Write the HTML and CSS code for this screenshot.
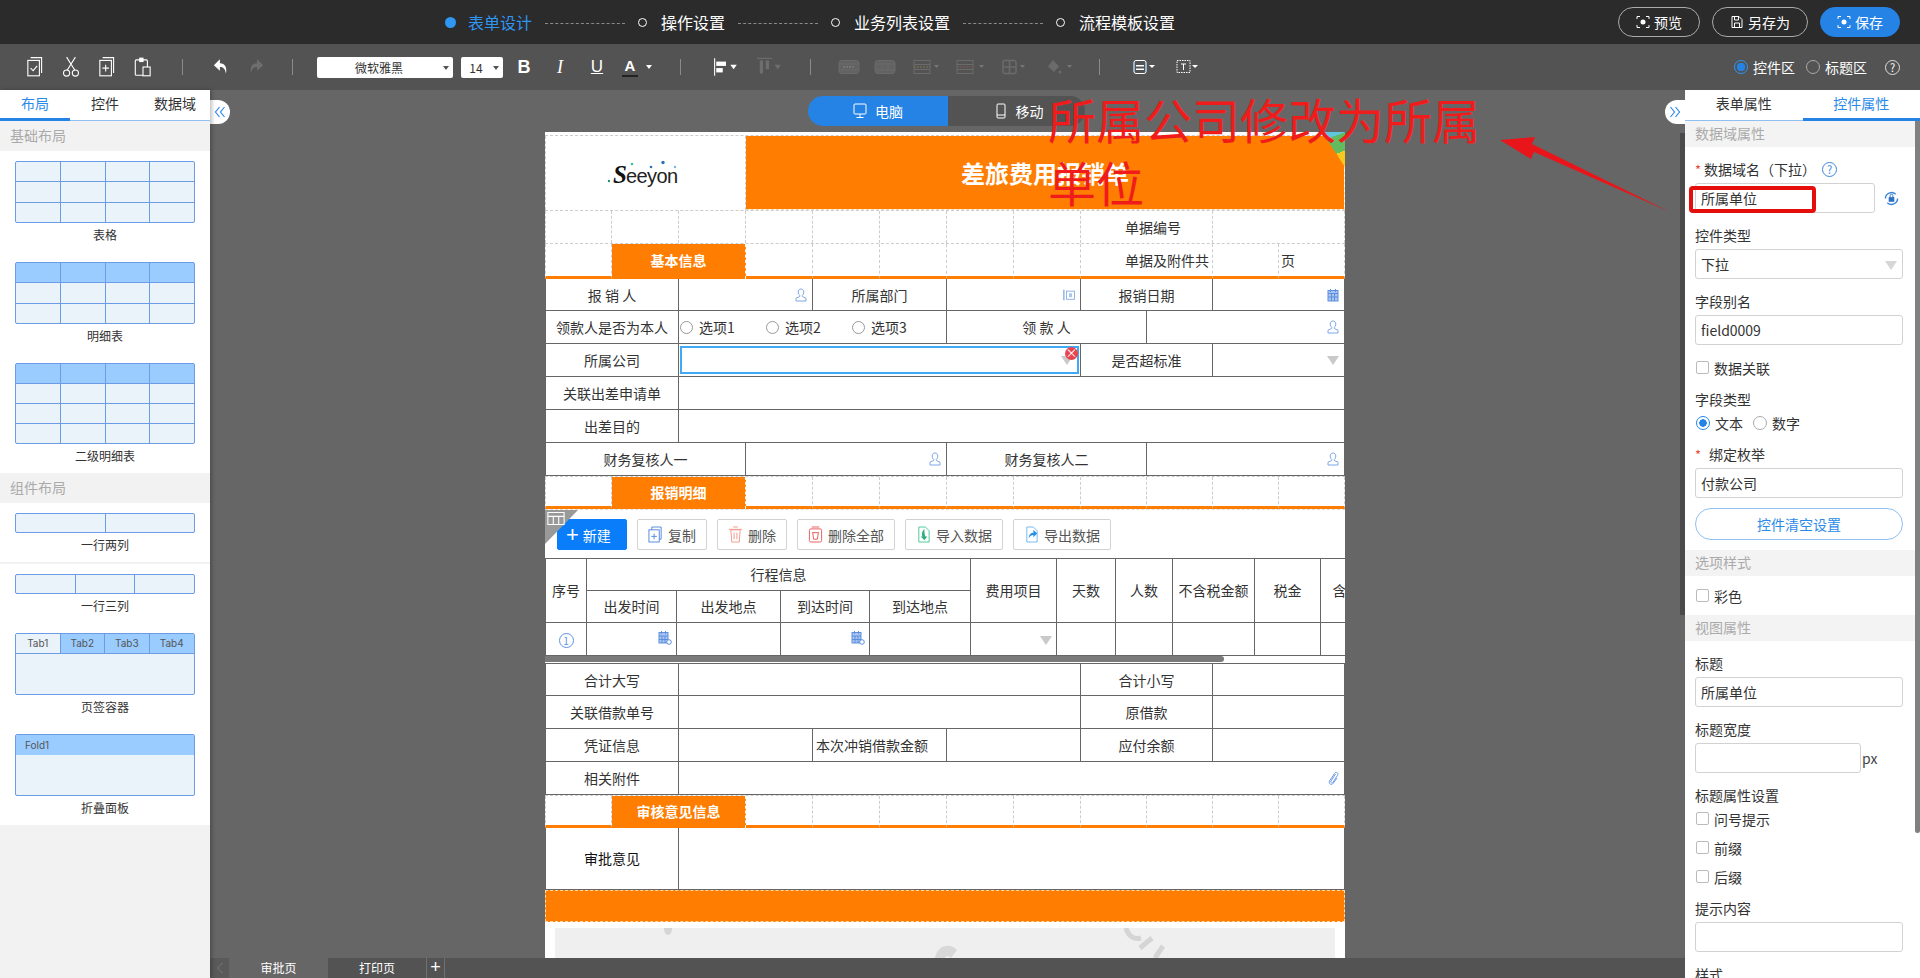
FILE: index.html
```html
<!DOCTYPE html>
<html lang="zh-CN">
<head>
<meta charset="utf-8">
<title>表单设计</title>
<link rel="stylesheet" href="styles.css">
</head>
<body>
<svg class="defs" width="0" height="0" aria-hidden="true">
  <symbol id="i-user" viewBox="0 0 12 14"><path d="M6 1c-1.800 0-2.800 1.300-2.800 3 0 1.500.7 2.700 1.500 3.300v1.200L1 10.200V13h10v-2.800L7.300 8.500V7.300C8.100 6.700 8.800 5.500 8.800 4 8.800 2.300 7.800 1 6 1z" fill="none" stroke="#7fa8e8" stroke-width="1"/></symbol>
  <symbol id="i-date" viewBox="0 0 12 14"><rect x="1" y="2.500" width="10" height="10.500" fill="#a9c6f2" stroke="#5d8fdc"/><path d="M3.500 1v3M8.500 1v3M1 5.500h10M4.500 5.500v7.500M7.500 5.500v7.500M1 9h10" stroke="#5d8fdc" fill="none"/></symbol>
  <symbol id="i-date2" viewBox="0 0 14 15"><rect x="1" y="2.500" width="9" height="10.500" fill="#a9c6f2" stroke="#5d8fdc"/><path d="M3.500 1v3M7.500 1v3M1 6h9M1 9.500h9M4 6v7M7 6v7" stroke="#5d8fdc" fill="none"/><circle cx="11" cy="12" r="2.300" fill="#fff" stroke="#5d8fdc"/></symbol>
  <symbol id="i-dept" viewBox="0 0 14 14"><path d="M1 1v12" stroke="#7fa8e8" stroke-width="1.500"/><rect x="4" y="2.500" width="9.500" height="9.500" fill="none" stroke="#7fa8e8"/><rect x="7" y="5" width="3.500" height="4.500" fill="#a9c6f2"/></symbol>
  <symbol id="i-shot" viewBox="0 0 14 14"><path d="M1 4V1.500h3M10 1.500h3V4M13 10v2.500h-3M4 12.500H1V10" fill="none" stroke="currentColor"/><circle cx="7" cy="7" r="2.500" fill="currentColor"/></symbol>
</svg>

<header class="topbar">
  <nav class="steps">
    <span class="dot on"></span><span class="step on">表单设计</span><span class="dash"></span>
    <span class="dot"></span><span class="step">操作设置</span><span class="dash"></span>
    <span class="dot"></span><span class="step">业务列表设置</span><span class="dash"></span>
    <span class="dot"></span><span class="step">流程模板设置</span>
  </nav>
  <div class="actions">
    <button class="pill"><svg class="pi"><use href="#i-shot"/></svg>预览</button>
    <button class="pill wide"><svg class="pi" viewBox="0 0 14 14"><path d="M2 1.500h7l3 3v8H2z" fill="none" stroke="currentColor"/><path d="M4.500 2v3h4V2M4.500 12V8h5v4" fill="none" stroke="currentColor"/></svg>另存为</button>
    <button class="pill save"><svg class="pi"><use href="#i-shot"/></svg>保存</button>
  </div>
</header>

<div class="toolbar">
  <div class="tools t1">
    <svg class="ti" viewBox="0 0 18 20"><path d="M5 1.500h10v14" fill="none" stroke="#fff"/><rect x="2.500" y="4" width="10.500" height="14" fill="none" stroke="#fff"/><path d="M5 11l2.300 2.300L11 9" fill="none" stroke="#fff"/></svg>
    <svg class="ti" viewBox="0 0 18 20"><path d="M5 1l7.500 12M13 1L5.500 13" stroke="#fff" fill="none"/><circle cx="5" cy="15.500" r="2.800" fill="none" stroke="#fff"/><circle cx="13" cy="15.500" r="2.800" fill="none" stroke="#fff"/></svg>
    <svg class="ti" viewBox="0 0 18 20"><path d="M5 1.500h10v14" fill="none" stroke="#fff"/><rect x="2.500" y="4" width="10.500" height="14" fill="none" stroke="#fff"/><path d="M7.800 8v6M4.800 11h6" stroke="#fff" fill="none"/></svg>
    <svg class="ti" viewBox="0 0 18 20"><rect x="2" y="3.500" width="11" height="14" rx="1" fill="none" stroke="#fff"/><rect x="5.500" y="1.500" width="4" height="4" fill="#fff"/><rect x="9" y="10" width="6.500" height="8" fill="#535353" stroke="#fff"/></svg>
  </div>
  <i class="sep s-a"></i>
  <div class="tools t2">
    <svg class="ti" viewBox="0 0 18 20"><path d="M8 3L2.500 8.500 8 13.500V10c3 0 4.800 1.500 5.500 6 1.200-5.500-.8-9.500-5.500-9.500z" fill="#fff"/></svg>
    <svg class="ti" viewBox="0 0 18 20"><path d="M10 3l5.500 5.500-5.500 5V10c-3 0-4.800 1.500-5.500 6-1.200-5.500.8-9.500 5.500-9.500z" fill="#6e6e6e"/></svg>
  </div>
  <i class="sep s-b"></i>
  <div class="sel font">微软雅黑<span class="car dk"></span></div>
  <div class="sel size">14<span class="car dk"></span></div>
  <span class="fmt b">B</span>
  <span class="fmt i">I</span>
  <span class="fmt u">U</span>
  <span class="fmt a">A</span><span class="car a-car"></span>
  <i class="sep s-c"></i>
  <svg class="ti align" viewBox="0 0 24 20"><path d="M1.500 2v16" stroke="#fff"/><rect x="3" y="5" width="9" height="4" fill="#fff"/><rect x="3" y="11" width="6" height="4" fill="#fff"/><path d="M16 8h6l-3 4z" fill="#fff"/></svg>
  <svg class="ti valign" viewBox="0 0 24 20"><path d="M1 2h14" stroke="#6e6e6e"/><rect x="3.500" y="4" width="3" height="12" fill="#6e6e6e"/><rect x="9" y="4" width="3" height="8" fill="#6e6e6e"/><path d="M17 8h6l-3 4z" fill="#6e6e6e"/></svg>
  <i class="sep s-d"></i>
  <div class="grays">
    <svg class="gi w22" viewBox="0 0 22 20"><rect x="1" y="3.500" width="20" height="13" rx="3" fill="#626262" stroke="#6b6b6b"/><path d="M1 7h20M1 13h20" stroke="#6b6b6b"/><path d="M5 10h12" stroke="#7b8a8a" stroke-dasharray="2 1"/></svg>
    <svg class="gi w22 m14" viewBox="0 0 22 20"><rect x="1" y="3.500" width="20" height="13" rx="3" fill="#626262" stroke="#6b6b6b"/><path d="M1 7h20M1 13h20M8 7v6M14 7v6" stroke="#6b6b6b"/></svg>
    <svg class="gi w28 m16" viewBox="0 0 28 20"><rect x="2" y="3.500" width="16" height="13" fill="none" stroke="#6b6b6b"/><path d="M2 7.500h16M2 12.500h16" stroke="#6b6b6b"/><path d="M2 10h16" stroke="#80785a" stroke-dasharray="2 1"/><path d="M22 8h5l-2.500 3z" fill="#777"/></svg>
    <svg class="gi w30 m15" viewBox="0 0 30 20"><rect x="2" y="3.500" width="16" height="13" fill="none" stroke="#6b6b6b"/><path d="M2 7.500h16M2 12.500h16" stroke="#6b6b6b"/><path d="M2 10h16" stroke="#805a5a" stroke-dasharray="2 1"/><path d="M24 8h5l-2.500 3z" fill="#777"/></svg>
    <svg class="gi w23 m17" viewBox="0 0 23 20"><rect x="1" y="3.500" width="13" height="13" rx="2" fill="none" stroke="#6b6b6b" stroke-width="1.500"/><path d="M1 10h13M7.500 3.500v13" stroke="#6b6b6b" stroke-width="1.500"/><path d="M18 8h5l-2.500 3z" fill="#777"/></svg>
    <svg class="gi w27 m20" viewBox="0 0 27 20"><path d="M8 3l6 6.500-5 5.500-6-5.500z" fill="#6b6b6b"/><circle cx="15" cy="15" r="1.500" fill="#6b6b6b"/><path d="M22 8h5l-2.500 3z" fill="#777"/></svg>
  </div>
  <i class="sep s-e"></i>
  <svg class="ti lay1" viewBox="0 0 22 20"><rect x="1" y="3.500" width="12" height="13" rx="2" fill="none" stroke="#fff"/><path d="M1 5v10M13 5v10" stroke="#8cc0f0"/><path d="M3 8h8v1.500H3zM3 11.500h8V13H3z" fill="#fff"/><path d="M16 8h6l-3 3z" fill="#fff"/></svg>
  <svg class="ti lay2" viewBox="0 0 22 20"><rect x="1" y="3.500" width="13" height="12" fill="none" stroke="#fff" stroke-dasharray="1.500 1"/><path d="M5 7h5M7.500 7v6" stroke="#fff"/><path d="M16 8h6l-3 3z" fill="#fff"/></svg>
  <div class="zones">
    <span class="zr on"></span><span class="zl">控件区</span>
    <span class="zr"></span><span class="zl">标题区</span>
    <span class="zq">?</span>
  </div>
</div>

<div class="main">
  <aside class="left">
    <div class="tabs three"><span class="tab on">布局</span><span class="tab">控件</span><span class="tab">数据域</span></div>
    <div class="gh">基础布局</div>
    <div class="lib">
      <div class="th g4 r3"><i></i><i></i><i></i><i></i><i></i><i></i><i></i><i></i><i></i><i></i><i></i><i></i></div>
      <div class="tl">表格</div>
      <div class="th g4 r3 hd"><i></i><i></i><i></i><i></i><i></i><i></i><i></i><i></i><i></i><i></i><i></i><i></i></div>
      <div class="tl">明细表</div>
      <div class="th g4 r4 hd"><i></i><i></i><i></i><i></i><i></i><i></i><i></i><i></i><i></i><i></i><i></i><i></i><i></i><i></i><i></i><i></i></div>
      <div class="tl">二级明细表</div>
    </div>
    <div class="gh">组件布局</div>
    <div class="lib lib2">
      <div class="th g2c"><i></i><i></i></div>
      <div class="tl short">一行两列</div>
    </div>
    <div class="lib lib3">
      <div class="th g3c"><i></i><i></i><i></i></div>
      <div class="tl">一行三列</div>
      <div class="tabth">
        <div class="tabhead"><span class="on">Tab1</span><span>Tab2</span><span>Tab3</span><span>Tab4</span></div>
      </div>
      <div class="tl">页签容器</div>
      <div class="tabth"><div class="foldhead">Fold1</div></div>
      <div class="tl last">折叠面板</div>
    </div>
  </aside>

  <div class="center">
    <div class="canvas">
      <div class="seg"><span class="seg-a"><svg class="si" viewBox="0 0 14 16"><rect x="1" y="1" width="12" height="10" rx="1" fill="none" stroke="#fff"/><path d="M7 11v3M3.500 14.500h7" stroke="#fff"/></svg>电脑</span><span class="seg-b"><svg class="si" viewBox="0 0 14 16"><rect x="3" y="1" width="8" height="14" rx="1" fill="none" stroke="#fff"/><path d="M3 12h8" stroke="#fff"/></svg>移动</span></div>

      <div class="form">
        <div class="gap"></div>
        <div class="row title-row">
          <div class="logo s3">
            <svg class="logo-svg" viewBox="0 0 76 26"><circle cx="26" cy="4" r="1.300" fill="#3fbf9f"/><circle cx="45" cy="7" r="1.300" fill="#2d6fb8"/><circle cx="57" cy="2.500" r="1.700" fill="#2d6fb8"/><circle cx="69" cy="7" r="1.200" fill="#7fb2e5"/><circle cx="3" cy="21" r="1.200" fill="#2a8f6f"/><text x="7" y="23" class="logo-big">S</text><text x="20" y="23" class="logo-text" textLength="52">eeyon</text></svg>
          </div>
          <div class="s9 title">差旅费用报销单</div>
        </div>
        <div class="row dash-row">
          <i class="dc"></i><i class="dc"></i><i class="dc"></i><i class="dc"></i><i class="dc"></i><i class="dc"></i><i class="dc"></i><i class="dc"></i>
          <div class="dc s2 lab-l">单据编号</div><div class="dc s2"></div>
        </div>
        <div class="row sec sec-tall">
          <i class="dc"></i><div class="sec-t s2">基本信息</div><i class="dc"></i><i class="dc"></i><i class="dc"></i><i class="dc"></i><i class="dc"></i>
          <div class="dc s2 lab-l">单据及附件共</div><i class="dc"></i><div class="dc val-l">页</div>
        </div>
        <div class="row f first"><div class="c s2">报 销 人</div><div class="c s2 ico"><svg class="fi"><use href="#i-user"/></svg></div><div class="c s2">所属部门</div><div class="c s2 ico"><svg class="fi"><use href="#i-dept"/></svg></div><div class="c s2">报销日期</div><div class="c s2 ico"><svg class="fi"><use href="#i-date"/></svg></div></div>
        <div class="row f"><div class="c s2">领款人是否为本人</div><div class="c s4 radios"><label><span class="ro"></span>选项1</label><label><span class="ro"></span>选项2</label><label><span class="ro"></span>选项3</label></div><div class="c s3">领 款 人</div><div class="c s3 ico"><svg class="fi"><use href="#i-user"/></svg></div></div>
        <div class="row f"><div class="c s2">所属公司</div><div class="c s6 selcell"><div class="focus"><span class="tri"></span><span class="x">×</span></div></div><div class="c s2">是否超标准</div><div class="c s2 ico"><span class="tri"></span></div></div>
        <div class="row f"><div class="c s2">关联出差申请单</div><div class="c s10"></div></div>
        <div class="row f"><div class="c s2">出差目的</div><div class="c s10"></div></div>
        <div class="row f"><div class="c s3">财务复核人一</div><div class="c s3 ico"><svg class="fi"><use href="#i-user"/></svg></div><div class="c s3">财务复核人二</div><div class="c s3 ico"><svg class="fi"><use href="#i-user"/></svg></div></div>
        <div class="row sec">
          <i class="dc"></i><div class="sec-t s2">报销明细</div><i class="dc"></i><i class="dc"></i><i class="dc"></i><i class="dc"></i><i class="dc"></i><i class="dc"></i><i class="dc"></i><i class="dc"></i><i class="dc"></i>
        </div>
        <div class="dtools">
          <span class="flag"><svg class="flag-g" viewBox="0 0 16 12"><path d="M.5.500h15v11H.5zM.5 4h15M5.500 4v7.500M10.500 4v7.500" fill="none" stroke="#fff"/></svg></span>
          <button class="db new"><span class="plus">+</span>新建</button>
          <button class="db"><svg class="bi" viewBox="0 0 16 18"><rect x="1" y="4" width="11" height="13" fill="none" stroke="#4f86e0"/><path d="M4 4V1h10v13h-2M6.500 8v6M3.500 11h6" fill="none" stroke="#4f86e0"/></svg>复制</button>
          <button class="db"><svg class="bi" viewBox="0 0 16 18"><path d="M3 4h10l-1 13H4zM1 3.500h14M5.500 1h5M6.500 7v7M9.500 7v7" fill="none" stroke="#f2958a"/></svg>删除</button>
          <button class="db"><svg class="bi" viewBox="0 0 16 18"><rect x="1.500" y="3" width="13" height="14" rx="1.500" fill="none" stroke="#ea5a5a"/><path d="M4 1h8M4.500 7h7M5 7l1 7h4l1-7" fill="none" stroke="#ea5a5a"/></svg>删除全部</button>
          <button class="db"><svg class="bi" viewBox="0 0 16 18"><path d="M3 1h7l4 4v12H3z" fill="none" stroke="#48c79a"/><path d="M9 3c-3 3-3 6-2 8H5l4 4 3-4h-2c-1-2-1-5-1-8z" fill="#2fae7d"/></svg>导入数据</button>
          <button class="db"><svg class="bi" viewBox="0 0 16 18"><path d="M3 1h7l4 4v12H3z" fill="none" stroke="#6fb6f0"/><path d="M5 13c0-4 2-6 5-6V4l4 4-4 4V9.500c-2 0-3.500 1-5 3.500z" fill="#2d8ee8"/></svg>导出数据</button>
        </div>
        <div class="dwrap">
          <table class="dt">
            <colgroup><col class="w1"><col class="w2"><col class="w3"><col class="w4"><col class="w5"><col class="w6"><col class="w7"><col class="w8"><col class="w9"><col class="w10"><col class="w11"></colgroup>
            <tr><th rowspan="2">序号</th><th colspan="4">行程信息</th><th rowspan="2">费用项目</th><th rowspan="2">天数</th><th rowspan="2">人数</th><th rowspan="2">不含税金额</th><th rowspan="2">税金</th><th rowspan="2">含税金额</th></tr>
            <tr><th>出发时间</th><th>出发地点</th><th>到达时间</th><th>到达地点</th></tr>
            <tr class="data"><td class="num"><span class="n1">1</span></td><td class="ic"><svg class="fi2"><use href="#i-date2"/></svg></td><td></td><td class="ic"><svg class="fi2"><use href="#i-date2"/></svg></td><td></td><td class="ic"><span class="tri"></span></td><td></td><td></td><td></td><td></td><td></td></tr>
          </table>
          <div class="hscroll"><span class="hthumb"></span></div>
        </div>
        <div class="row f first2"><div class="c s2">合计大写</div><div class="c s6"></div><div class="c s2">合计小写</div><div class="c s2"></div></div>
        <div class="row f"><div class="c s2">关联借款单号</div><div class="c s6"></div><div class="c s2">原借款</div><div class="c s2"></div></div>
        <div class="row f"><div class="c s2">凭证信息</div><div class="c s2"></div><div class="c s2 start">本次冲销借款金额</div><div class="c s2"></div><div class="c s2">应付余额</div><div class="c s2"></div></div>
        <div class="row f"><div class="c s2">相关附件</div><div class="c s10 ico"><svg class="fi" viewBox="0 0 12 14"><path d="M8.500 3L4 10c-1 1.500 1 2.800 2 1.300l4.500-7C12 2 9 .200 7.500 2.500L2.500 10c-1.500 2.500 2 4.800 3.700 2.300L10 7" fill="none" stroke="#6d9ce6"/></svg></div></div>
        <div class="row sec">
          <i class="dc"></i><div class="sec-t s2">审核意见信息</div><i class="dc"></i><i class="dc"></i><i class="dc"></i><i class="dc"></i><i class="dc"></i><i class="dc"></i><i class="dc"></i><i class="dc"></i><i class="dc"></i>
        </div>
        <div class="row f tall"><div class="c s2 strong">审批意见</div><div class="c s10"></div></div>
        <div class="band"></div>
        <div class="sig"><svg class="wm" viewBox="0 0 780 32"><ellipse cx="113" cy="1" rx="4" ry="6" fill="#d5d5d5"/><path d="M380 30c2-12 14-16 22-8l-6 8c-3-3-6-2-7 2z" fill="#d8d8d8"/><path d="M571 0c2 8 8 12 15 10M585 20l12-10M600 30l8-12" stroke="#d5d5d5" stroke-width="5" fill="none"/></svg></div>
        <span class="corner"></span>
      </div>

      <button class="edge e-l"><svg class="chev" viewBox="0 0 12 12"><path d="M5.500 1L1.500 6l4 5M10.500 1l-4 5 4 5" fill="none" stroke="#2b8ae8" stroke-width="1.200"/></svg></button>
      <button class="edge e-r"><svg class="chev" viewBox="0 0 12 12"><path d="M1.500 1l4 5-4 5M6.500 1l4 5-4 5" fill="none" stroke="#2b8ae8" stroke-width="1.200"/></svg></button>
      <span class="cscroll"></span>
      <div class="note">所属公司修改为所属单位</div>
      <svg class="arrow" viewBox="0 0 180 80"><path d="M174 78L38 18l-3 7L4 6l35-3-3 7z" fill="#e8161a"/></svg>
    </div>
    <div class="pages">
      <span class="pg-back"><svg class="pg-ar" viewBox="0 0 8 12"><path d="M6.500 1L1.500 6l5 5" fill="none" stroke="#7a7a7a"/></svg></span>
      <span class="pg on">审批页</span><span class="pg p2">打印页</span><span class="pg-add">+</span>
    </div>
  </div>

  <aside class="right">
    <div class="tabs two"><span class="tab">表单属性</span><span class="tab on">控件属性</span></div>
    <div class="props">
      <div class="ph">数据域属性</div>
      <div class="pb one">
        <div class="pl first-l"><b class="req">*</b> 数据域名（下拉）<span class="help">?</span></div>
        <div class="in-line"><div class="inp short-in">所属单位</div><svg class="lock" viewBox="0 0 16 16"><path d="M1.500 8a6.500 6.500 0 0 1 11-4.500M14.500 8a6.500 6.500 0 0 1-11 4.500" fill="none" stroke="#3d86dc" stroke-width="1.500"/><rect x="5" y="6.500" width="6" height="5" fill="#2f6fc0"/><path d="M6.500 6.500V5a1.500 1.500 0 0 1 3 0v1.500" fill="none" stroke="#2f6fc0"/></svg><span class="redbox"></span></div>
        <div class="pl">控件类型</div>
        <div class="inp sel-in">下拉<span class="tri pale"></span></div>
        <div class="pl">字段别名</div>
        <div class="inp">field0009</div>
        <label class="chk"><span class="cb"></span>数据关联</label>
        <div class="pl tight">字段类型</div>
        <div class="rad"><span class="rr on"></span>文本<span class="rr"></span>数字</div>
        <div class="pl bind"><b class="req">*</b><span class="ind">绑定枚举</span></div>
        <div class="inp">付款公司</div>
        <button class="clear">控件清空设置</button>
      </div>
      <div class="ph">选项样式</div>
      <div class="pb sm"><label class="chk"><span class="cb"></span>彩色</label></div>
      <div class="ph">视图属性</div>
      <div class="pb view">
        <div class="pl">标题</div>
        <div class="inp">所属单位</div>
        <div class="pl">标题宽度</div>
        <div class="in-line"><div class="inp px-in"></div><span class="px">px</span></div>
        <div class="pl">标题属性设置</div>
        <label class="chk c2 c2f"><span class="cb"></span>问号提示</label>
        <label class="chk c2"><span class="cb"></span>前缀</label>
        <label class="chk c2"><span class="cb"></span>后缀</label>
        <div class="pl hint">提示内容</div>
        <div class="inp"></div>
        <div class="pl">样式</div>
      </div>
      <span class="vscroll"></span>
    </div>
  </aside>
</div>
</body>
</html>
```
FILE: styles.css
```css
* { box-sizing: border-box; }
html, body { margin: 0; height: 100%; overflow: hidden; }
body { font-family: "Noto Sans CJK SC", "Liberation Sans", sans-serif; font-size: 14px; color: #333; background: #666; }
button { font: inherit; }
.defs { position: absolute; }

/* top */
.topbar { height: 44px; background: #2b2b2b; display: flex; align-items: center; color: #fff; padding-left: 445px; padding-right: 20px; justify-content: space-between; }
.steps { display: flex; align-items: center; font-size: 16px; }
.dot { width: 9px; height: 9px; border-radius: 50%; border: 1px solid #fff; margin-right: 14px; }
.dot.on { width: 11px; height: 11px; background: #2f96f3; border: 0; margin-right: 12px; }
.step { white-space: nowrap; }
.step.on { color: #2f96f3; }
.dash { width: 80px; margin: 2px 13px 0; border-top: 1px dashed #8a8a8a; }
.actions { display: flex; gap: 12px; }
.pill { height: 30px; width: 82px; border-radius: 15px; border: 1px solid #aaa; background: transparent; color: #fff; font-size: 14px; display: flex; align-items: center; justify-content: center; gap: 4px; padding: 0; }
.pill.wide { width: 96px; }
.pill.save { width: 80px; background: #2583e6; border-color: #2583e6; }
.pi { width: 14px; height: 14px; }

/* toolbar */
.toolbar { height: 46px; background: #535353; display: flex; align-items: center; padding-left: 25px; color: #fff; }
.tools { display: flex; gap: 16px; }
.ti { width: 20px; height: 22px; flex: none; }
.sep { width: 1px; height: 16px; background: #8a8a8a; flex: none; }
.s-a { margin: 0 0 0 29px; }
.t2 { margin-left: 28px; gap: 15px; }
.s-b { margin-left: 26px; }
.sel { background: #fff; color: #333; height: 21px; border-radius: 2px; font-size: 12px; display: flex; align-items: center; justify-content: center; position: relative; flex: none; }
.font { width: 136px; margin-left: 24px; padding-right: 12px; }
.size { width: 42px; margin-left: 8px; padding-right: 12px; }
.car { width: 0; height: 0; border: 3px solid transparent; border-top: 4px solid #fff; border-bottom: 0; flex: none; }
.car.dk { border-top-color: #555; position: absolute; right: 4px; top: 9px; }
.fmt { font-family: "Liberation Sans", sans-serif; font-size: 18px; width: 16px; text-align: center; flex: none; color: #fff; }
.fmt.b { margin-left: 13px; font-weight: 700; }
.fmt.i { margin-left: 20px; font-style: italic; font-family: "Liberation Serif", serif; }
.fmt.u { margin-left: 21px; text-decoration: underline; font-size: 17px; }
.fmt.a { margin-left: 17px; font-weight: 700; font-size: 15px; border-bottom: 2px solid #222; line-height: 18px; }
.a-car { margin-left: 8px; }
.s-c { margin-left: 28px; }
.align { width: 26px; margin-left: 32px; }
.valign { width: 26px; margin-left: 17px; }
.s-d { margin-left: 28px; }
.grays { display: flex; margin-left: 27px; }
.gi { height: 20px; flex: none; }
.w22 { width: 22px; } .w23 { width: 23px; } .w27 { width: 27px; } .w28 { width: 28px; } .w30 { width: 30px; }
.m14 { margin-left: 14px; } .m15 { margin-left: 15px; } .m16 { margin-left: 16px; } .m17 { margin-left: 17px; } .m20 { margin-left: 20px; }
.s-e { margin-left: 27px; }
.lay1 { width: 22px; margin-left: 33px; }
.lay2 { width: 22px; margin-left: 21px; }
.zones { margin-left: auto; display: flex; align-items: center; padding-right: 20px; font-size: 14px; }
.zr { width: 14px; height: 14px; border-radius: 50%; border: 1px solid #aaa; margin-right: 5px; }
.zr.on { border: 1px solid #2f96f3; background: radial-gradient(circle, #2583e6 0 4px, transparent 4.500px); }
.zl { margin-right: 11px; }
.zq { width: 15px; height: 15px; border: 1px solid #ddd; border-radius: 50%; font-size: 11px; line-height: 13px; text-align: center; margin-left: 7px; }

/* layout */
.main { height: 888px; display: flex; }
.left { width: 210px; background: #f2f2f2; flex: none; position: relative; z-index: 2; box-shadow: 2px 0 4px rgba(0,0,0,.25); }
.right { width: 235px; background: #fff; flex: none; display: flex; flex-direction: column; min-height: 0; position: relative; z-index: 2; }
.center { flex: 1; min-width: 0; display: flex; flex-direction: column; }

.tabs { height: 31px; display: flex; background: #fff; border-bottom: 1px solid #90c0f2; }
.tab { flex: 1; text-align: center; line-height: 27px; height: 31px; color: #333; font-size: 14px; }
.tab.on { color: #2b8ae8; border-bottom: 3px solid #2583e6; }

.gh { height: 30px; line-height: 28px; padding-left: 10px; color: #aaa; background: #f2f2f2; }
.lib { background: #fff; padding: 10px 15px 0; height: 322px; }
.lib2 { height: 59px; }
.lib3 { margin-top: 2px; height: 261px; }
.th { height: 62px; border: 1px solid #6c9ce6; border-radius: 2px; display: grid; overflow: hidden; gap: 1px; background: #6c9ce6; }
.th i { background: #eaf2fa; }
.g4 { grid-template-columns: repeat(4, 1fr); }
.r3 { grid-template-rows: repeat(3, 1fr); }
.r4 { grid-template-rows: repeat(4, 1fr); height: 81px; }
.hd i:nth-child(-n+4) { background: #9accff; }
.g2c { grid-template-columns: 1fr 1fr; height: 20px; }
.g3c { grid-template-columns: repeat(3, 1fr); height: 20px; }
.tl { text-align: center; font-size: 12px; color: #333; line-height: 17px; margin: 3px 0 19px; }
.tl.short { margin-bottom: 0; }
.tl.last { margin-bottom: 0; }
.tabth { height: 62px; border: 1px solid #6c9ce6; border-radius: 2px; background: #eaf2fa; overflow: hidden; }
.tabhead { display: grid; grid-template-columns: repeat(4, 1fr); height: 20px; border-bottom: 1px solid #6c9ce6; font-size: 10px; line-height: 19px; text-align: center; color: #555; background: #9accff; font-family: "Inter", sans-serif; }
.tabhead span { border-right: 1px solid #6c9ce6; }
.tabhead span:last-child { border-right: 0; }
.tabhead .on { background: #eaf2fa; }
.foldhead { height: 20px; background: #9accff; font-size: 10px; line-height: 20px; padding-left: 9px; color: #555; font-family: "Inter", sans-serif; }

/* canvas */
.canvas { flex: 1; min-height: 0; position: relative; overflow: hidden; background: #666; padding-left: 335px; }
.seg { display: flex; height: 30px; margin: 6px 0 6px 263px; width: 277px; border-radius: 15px; overflow: hidden; color: #fff; font-size: 14px; }
.seg-a, .seg-b { display: flex; align-items: center; justify-content: center; gap: 8px; }
.seg-a { width: 140px; background: #2583e6; }
.seg-b { width: 137px; background: #535353; padding-left: 4px; }
.si { width: 14px; height: 16px; }

.form { width: 800px; background: #fff; color: #333; font-size: 14px; position: relative; }
.gap { height: 4px; border-bottom: 1px dashed #ccc; }
.row { display: grid; grid-template-columns: repeat(8, 67px) repeat(4, 66px); }
.s2 { grid-column: span 2; } .s3 { grid-column: span 3; } .s4 { grid-column: span 4; }
.s6 { grid-column: span 6; } .s9 { grid-column: span 9; } .s10 { grid-column: span 10; }
.title-row { height: 74px; }
.logo { display: flex; align-items: center; justify-content: center; border-right: 1px dashed #ccc; border-left: 1px dashed #ccc; }
.logo-svg { width: 76px; height: 26px; margin-left: -3px; overflow: visible; }
.logo-big { font: italic 700 25px "Liberation Serif", serif; fill: #111; }
.logo-text { font: 400 20px "Liberation Sans", sans-serif; fill: #222; }
.title { background: #ff7d00; color: #fff; font-size: 24px; font-weight: 700; display: flex; align-items: center; justify-content: center; border: 1px dashed #ffd9a8; border-width: 0 1px 1px 0; background-clip: padding-box; }
.corner { position: absolute; right: 0; top: 0; width: 23px; height: 35px; clip-path: polygon(0 0, 100% 0, 100% 100%); background: linear-gradient(160deg, #5fc6e0 0 20%, #62bb5e 20% 62%, #f7c81e 62%); }
.dash-row { height: 33px; border-top: 1px dashed #ccc; }
.dc { border-right: 1px dashed #ccc; display: flex; align-items: center; min-width: 0; }
.dash-row .dc:first-child, .sec .dc:first-child { border-left: 1px dashed #ccc; }
.lab-l { padding-left: 44px; white-space: nowrap; }
.val-l { padding-left: 2px; }
.sec { height: 33px; border-top: 1px dashed #ccc; }
.sec-tall { height: 36px; }
.sec .dc { border-bottom: 3px solid #ff7d00; }
.sec-t { background: #ff7d00; color: #fff; font-weight: 700; display: flex; align-items: center; justify-content: center; border-right: 1px dashed #fff; padding-bottom: 3px; }
.row.f { height: 33px; border-bottom: 1px solid #666; }
.row.first { height: 32px; }
.row.first2 { border-top: 1px solid #666; height: 33px; }
.c { border-right: 1px solid #666; display: flex; align-items: center; justify-content: center; white-space: nowrap; min-width: 0; position: relative; }
.c:first-child { border-left: 1px solid #666; }
.c.start { justify-content: flex-start; padding-left: 3px; }
.ico { justify-content: flex-end; padding-right: 5px; }
.fi { width: 12px; height: 14px; }
.fi2 { width: 14px; height: 15px; }
.radios { justify-content: flex-start; padding-left: 1px; }
.radios label { display: flex; align-items: center; width: 86px; gap: 6px; }
.ro { width: 13px; height: 13px; border: 1px solid #999; border-radius: 50%; }
.tri { width: 0; height: 0; border-left: 6px solid transparent; border-right: 6px solid transparent; border-top: 9px solid #c9c9c9; display: inline-block; }
.selcell { padding: 2px 1px; align-items: stretch; justify-content: stretch; }
.focus { flex: 1; border: 2px solid #3fa9f5; display: flex; align-items: center; justify-content: flex-end; padding-right: 4px; position: relative; }
.x { position: absolute; right: -1px; top: -1px; width: 13px; height: 13px; border-radius: 50%; background: #e8434f; color: #fff; font-size: 12px; line-height: 12px; text-align: center; }
.dtools { height: 49px; display: flex; gap: 10px; padding: 9px 0 0 12px; border-top: 1px dashed #ddd; position: relative; }
.flag { position: absolute; left: 0; top: 0; width: 0; height: 0; border-style: solid; border-width: 34px 33px 0 0; border-color: #999 transparent transparent transparent; z-index: 1; }
.flag-g { position: absolute; left: 2px; top: -32px; width: 18px; height: 13px; }
.db { height: 31px; padding: 0 10px; border: 1px solid #d2d2d2; border-radius: 2px; background: #fff; color: #555; font-size: 14px; display: flex; align-items: center; gap: 5px; }
.db.new { background: #0a7dfa; border-color: #0a7dfa; color: #fff; width: 70px; padding: 0 8px; gap: 4px; }
.plus { font-size: 22px; line-height: 24px; font-family: "Liberation Sans", sans-serif; font-weight: 400; }
.bi { width: 15px; height: 17px; flex: none; }
.dwrap { overflow: hidden; width: 800px; }
.dt { table-layout: fixed; width: 855px; border-collapse: collapse; font-size: 14px; color: #333; border-top: 1px solid #666; }
.w1 { width: 41px; } .w2 { width: 90px; } .w3 { width: 104px; } .w4 { width: 89px; } .w5 { width: 101px; } .w6 { width: 86px; }
.w7 { width: 59px; } .w8 { width: 57px; } .w9 { width: 82px; } .w10 { width: 66px; } .w11 { width: 80px; }
.dt th, .dt td { border: 1px solid #666; padding: 0 0 1px; font-weight: 400; height: 32px; text-align: center; white-space: nowrap; overflow: hidden; }
.dt .data td { height: 33px; }
.dt .ic { text-align: right; padding-right: 4px; vertical-align: middle; }
.n1 { display: inline-block; width: 15px; height: 15px; border: 1px solid #5d93e6; border-radius: 50%; color: #5d93e6; font-size: 10px; line-height: 13px; }
.hscroll { height: 7px; background: #fff; }
.hthumb { display: block; width: 679px; height: 6px; background: #7a7a7a; border-radius: 0 3px 3px 0; }
.row.tall { height: 62px; }
.strong { color: #111; padding-bottom: 2px; }
.band { height: 32px; background: #ff7d00; border: 1px dashed #ffd9a8; }
.sig { height: 40px; margin: 6px 10px 0; background: #efefef; overflow: hidden; }
.wm { display: block; width: 100%; height: 32px; }

.edge { position: absolute; top: 10px; width: 20px; height: 24px; background: #fff; border: 0; padding: 0; display: flex; align-items: center; justify-content: center; }
.chev { width: 12px; height: 12px; }
.e-l { left: 0; border-radius: 0 12px 12px 0; }
.e-r { right: 0; border-radius: 12px 0 0 12px; }
.cscroll { position: absolute; right: 0; top: 43px; width: 5px; height: 482px; background: #4a4a4a; }
.note { position: absolute; left: 838px; top: -3px; width: 440px; font-size: 48px; line-height: 63px; color: #f01c1c; }
.arrow { position: absolute; left: 1286px; top: 44px; width: 180px; height: 80px; }

.pages { height: 20px; background: #535353; display: flex; font-size: 12px; color: #fff; flex: none; }
.pg-back { width: 19px; background: #5a5a5a; display: flex; align-items: center; justify-content: center; }
.pg-ar { width: 8px; height: 12px; }
.pg { width: 99px; text-align: center; line-height: 20px; }
.pg.p2 { width: 98px; }
.pg.on { background: #666; }
.pg-add { width: 19px; border: solid #707070; border-width: 0 1px; text-align: center; font-size: 18px; line-height: 18px; font-family: "Liberation Sans", sans-serif; }

/* right */
.tabs.two { flex: none; }
.props { flex: 1; min-height: 0; overflow: hidden; position: relative; font-size: 14px; color: #333; }
.ph { height: 26px; line-height: 25px; background: #f3f3f3; color: #aaa; padding-left: 10px; font-size: 14px; }
.pb { padding: 0 17px 0 10px; }
.pb.one { padding-top: 11px; height: 403px; }
.pb.sm { padding-top: 8px; height: 39px; }
.pb.view { padding-top: 11px; }
.pl { height: 23px; line-height: 23px; margin-bottom: 2px; }
.pl.first-l { display: flex; align-items: center; }
.req { color: #e84a3c; font-weight: 400; margin-right: 3px; font-size: 13px; }
.help { width: 15px; height: 15px; border: 1px solid #3d86dc; border-radius: 50%; color: #3d86dc; font-size: 11px; line-height: 13px; text-align: center; margin-left: 6px; }
.inp { height: 30px; border: 1px solid #d2d2d2; border-radius: 3px; line-height: 28px; padding-left: 5px; margin-bottom: 11px; }
.in-line { display: flex; align-items: center; position: relative; margin-bottom: 11px; }
.in-line .inp { flex: none; margin-bottom: 0; }
.short-in { width: 180px; }
.lock { width: 15px; height: 15px; margin-left: 9px; }
.redbox { position: absolute; left: -6px; top: 3px; width: 127px; height: 27px; border: 4px solid #e60d0d; border-radius: 4px; }
.sel-in { position: relative; }
.sel-in .tri { position: absolute; right: 5px; top: 11px; }
.tri.pale { border-top-color: #d6d6d6; }
.chk { display: flex; align-items: center; gap: 5px; height: 23px; }
.cb { width: 13px; height: 13px; border: 1px solid #bbb; border-radius: 2px; margin-left: 1px; }
.pl.tight { margin-top: 9px; margin-bottom: 0; }
.rad { display: flex; align-items: center; height: 23px; }
.rr { width: 14px; height: 14px; border: 1px solid #aaa; border-radius: 50%; margin: 0 5px 0 10px; }
.rr.on { margin-left: 1px; border-color: #2583e6; background: radial-gradient(circle, #2583e6 0 3.500px, transparent 4px); }
.pl.bind { margin-top: 9px; }
.ind { margin-left: 5px; }
.clear { display: block; width: 100%; height: 32px; margin-top: -1px; border: 1px solid #90c0f2; border-radius: 16px; background: #fff; color: #2b8ae8; font-size: 14px; padding: 0; }
.px-in { width: 166px; }
.px { margin-left: 1px; color: #444; }
.c2 { height: 29px; }
.c2f { margin-top: -5px; }
.pl.hint { margin-top: 6px; }
.vscroll { position: absolute; right: 0; top: 0; width: 5px; height: 712px; background: #808080; border-radius: 0 0 3px 3px; }
```
